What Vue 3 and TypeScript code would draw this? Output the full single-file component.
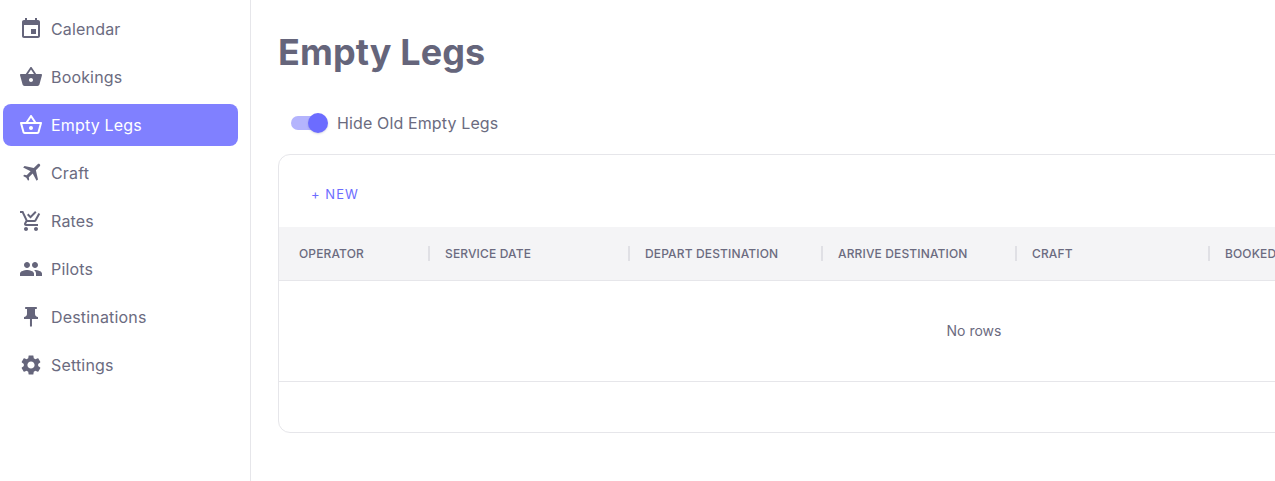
<script setup lang="ts">
interface NavItem {
  label: string;
  path: string;
  transform?: string;
  active?: boolean;
}

const nav: NavItem[] = [
  {
    label: "Calendar",
    path: "M17 12h-5v5h5v-5zM16 1v2H8V1H6v2H5c-1.11 0-1.99.9-1.99 2L3 19c0 1.1.89 2 2 2h14c1.1 0 2-.9 2-2V5c0-1.1-.9-2-2-2h-1V1h-2zm3 18H5V8h14v11z",
  },
  {
    label: "Bookings",
    path: "M17.21 9l-4.38-6.56c-.19-.28-.51-.42-.83-.42-.32 0-.64.14-.83.43L6.79 9H2c-.55 0-1 .45-1 1 0 .09.01.18.04.27l2.54 9.27c.23.84 1 1.46 1.92 1.46h13c.92 0 1.69-.62 1.93-1.46l2.54-9.27L23 10c0-.55-.45-1-1-1h-4.79zM9 9l3-4.4L15 9H9zm3 8c-1.1 0-2-.9-2-2s.9-2 2-2 2 .9 2 2-.9 2-2 2z",
  },
  {
    label: "Empty Legs",
    active: true,
    path: "M22 9h-4.79l-4.38-6.56c-.19-.28-.51-.42-.83-.42s-.64.14-.83.43L6.79 9H2c-.55 0-1 .45-1 1 0 .09.01.18.04.27l2.54 9.27c.23.84 1 1.46 1.92 1.46h13c.92 0 1.69-.62 1.93-1.46l2.54-9.27L23 10c0-.55-.45-1-1-1zM12 4.8L14.8 9H9.2L12 4.8zM18.5 19l-12.99.01L3.31 11H20.7l-2.2 8zM12 13c-1.1 0-2 .9-2 2s.9 2 2 2 2-.9 2-2-.9-2-2-2z",
  },
  {
    label: "Craft",
    transform: "translate(2.2 -1.7) rotate(45 11.5 12)",
    path: "M21 16v-2l-8-5V3.5c0-.83-.67-1.5-1.5-1.5S10 2.67 10 3.5V9l-8 5v2l8-2.5V19l-2 1.5V22l3.5-1 3.5 1v-1.5L13 19v-5.5l8 2.5z",
  },
  {
    label: "Rates",
    path: "M11.5 9.5L8 6l1.41-1.41 2.09 2.09 4.59-4.59L17.5 3.5zM7 18c-1.1 0-1.99.9-1.99 2S5.9 22 7 22s2-.9 2-2-.9-2-2-2zm10 0c-1.1 0-1.99.9-1.99 2s.89 2 1.99 2 2-.9 2-2-.9-2-2-2zm-9.83-3.25l.03-.12.9-1.63h7.45c.75 0 1.41-.41 1.75-1.03l3.86-7.01L19.42 4h-.01l-1.1 2-2.76 5H8.53l-.13-.27L6.16 6l-.95-2-.94-2H1v2h2l3.6 7.59-1.35 2.45c-.16.28-.25.61-.25.96 0 1.1.9 2 2 2h12v-2H7.42c-.13 0-.25-.11-.25-.25z",
  },
  {
    label: "Pilots",
    path: "M16 11c1.66 0 2.99-1.34 2.99-3S17.66 5 16 5c-1.66 0-3 1.34-3 3s1.34 3 3 3zm-8 0c1.66 0 2.99-1.34 2.99-3S9.66 5 8 5C6.34 5 5 6.34 5 8s1.34 3 3 3zm0 2c-2.33 0-7 1.17-7 3.5V19h14v-2.5c0-2.33-4.67-3.5-7-3.5zm8 0c-.29 0-.62.02-.97.05 1.16.84 1.97 1.97 1.97 3.45V19h6v-2.5c0-2.33-4.67-3.5-7-3.5z",
  },
  {
    label: "Destinations",
    path: "M16 9V4h1c.55 0 1-.45 1-1s-.45-1-1-1H7c-.55 0-1 .45-1 1s.45 1 1 1h1v5c0 1.66-1.34 3-3 3v2h5.97v7l1 1 1-1v-7H19v-2c-1.66 0-3-1.34-3-3z",
  },
  {
    label: "Settings",
    path: "M19.14 12.94c.04-.3.06-.61.06-.94 0-.32-.02-.64-.07-.94l2.03-1.58c.18-.14.23-.41.12-.61l-1.92-3.32c-.12-.22-.37-.29-.59-.22l-2.39.96c-.5-.38-1.03-.7-1.62-.94l-.36-2.54c-.04-.24-.24-.41-.48-.41h-3.84c-.24 0-.43.17-.47.41l-.36 2.54c-.59.24-1.13.57-1.62.94l-2.39-.96c-.22-.08-.47 0-.59.22L2.74 8.87c-.12.21-.08.47.12.61l2.03 1.58c-.05.3-.09.63-.09.94s.02.64.07.94l-2.03 1.58c-.18.14-.23.41-.12.61l1.92 3.32c.12.22.37.29.59.22l2.39-.96c.5.38 1.03.7 1.62.94l.36 2.54c.05.24.24.41.48.41h3.84c.24 0 .44-.17.47-.41l.36-2.54c.59-.24 1.13-.56 1.62-.94l2.39.96c.22.08.47 0 .59-.22l1.92-3.32c.12-.22.07-.47-.12-.61l-2.01-1.58zM12 15.6c-1.98 0-3.6-1.62-3.6-3.6s1.62-3.6 3.6-3.6 3.6 1.62 3.6 3.6-1.62 3.6-3.6 3.6z",
  },
];

const columns = ["Operator", "Service Date", "Depart Destination", "Arrive Destination", "Craft", "Booked"];
</script>

<template>
  <div class="layout">
    <aside class="sidebar">
      <a v-for="item in nav" :key="item.label" class="nav-item" :class="{ active: item.active }">
        <svg class="nav-icon" viewBox="0 0 24 24" width="24" height="24" fill="currentColor">
          <path :d="item.path" :transform="item.transform" />
        </svg>
        <span>{{ item.label }}</span>
      </a>
    </aside>

    <main class="content">
      <h1 class="title">Empty Legs</h1>

      <div class="toggle-row">
        <span class="switch"><span class="thumb"></span></span>
        <span class="toggle-label">Hide Old Empty Legs</span>
      </div>

      <section class="card">
        <div class="toolbar"><button class="new-btn">+ New</button></div>
        <div class="thead">
          <div v-for="col in columns" :key="col" class="th">{{ col }}</div>
        </div>
        <div class="empty">No rows</div>
        <div class="tfoot"></div>
      </section>
    </main>
  </div>
</template>

<style>
html,
body {
  margin: 0;
  background: #fff;
  overflow: hidden;
}
</style>

<style scoped>
.layout {
  display: flex;
  height: 481px;
  width: 1275px;
  overflow: hidden;
  font-family: Inter, "Noto Sans", sans-serif;
  color: #6b6b80;
}

.sidebar {
  flex: 0 0 251px;
  box-sizing: border-box;
  border-right: 1px solid #e6e6ea;
  padding: 8px 12px 0 3px;
  display: flex;
  flex-direction: column;
  gap: 6px;
}

.nav-item {
  display: flex;
  align-items: center;
  gap: 8px;
  height: 42px;
  padding-left: 16px;
  border-radius: 8px;
  font-size: 16px;
  letter-spacing: 0.17px;
}

.nav-item.active {
  background: #8080ff;
  color: #fff;
}

.nav-icon {
  flex: none;
  color: #65657b;
}

.active .nav-icon {
  color: #fff;
}

.content {
  flex: 1;
  min-width: 0;
  padding: 0 0 0 27px;
}

.title {
  margin: 0;
  padding-top: 30px;
  font-size: 36px;
  line-height: 44px;
  font-weight: 700;
  letter-spacing: 0.1px;
  color: #65657b;
}

.toggle-row {
  display: flex;
  align-items: center;
  height: 38px;
  margin-top: 30px;
  padding-left: 13px;
  gap: 9px;
}

.switch {
  position: relative;
  width: 34px;
  height: 14px;
  margin-right: 3px;
  border-radius: 7px;
  background: #b4b4fd;
}

.thumb {
  position: absolute;
  right: -3px;
  top: -3px;
  width: 20px;
  height: 20px;
  border-radius: 50%;
  background: #6c6cff;
  box-shadow: 0 1px 2px rgba(60, 60, 120, 0.2);
}

.toggle-label {
  font-size: 16px;
  letter-spacing: 0.13px;
}

.card {
  width: 1390px;
  box-sizing: border-box;
  margin-top: 12px;
  border: 1px solid #e6e6ea;
  border-radius: 12px;
  overflow: hidden;
}

.toolbar {
  height: 72px;
  box-sizing: border-box;
  padding: 6px 0 0 24px;
  display: flex;
  align-items: center;
}

.new-btn {
  border: 0;
  background: none;
  padding: 0 8px;
  font: 400 13px Inter, sans-serif;
  letter-spacing: 1.05px;
  text-transform: uppercase;
  color: #6c6cff;
}

.thead {
  display: grid;
  grid-template-columns: 149px 200px 193px 194px 193px 1fr;
  height: 53px;
  align-items: center;
  background: #f4f4f6;
  border-bottom: 1px solid #e6e6ea;
}

.th {
  box-sizing: border-box;
  padding-left: 15px;
  font-size: 12px;
  font-weight: 500;
  letter-spacing: 0.14px;
  text-transform: uppercase;
  white-space: nowrap;
  border-left: 2px solid #e0e0e5;
  line-height: 15px;
}

.th:first-child {
  padding-left: 20px;
  border-left: 0;
}

.empty {
  height: 101px;
  box-sizing: border-box;
  padding: 0 0 1px 2px;
  display: flex;
  align-items: center;
  justify-content: center;
  font-size: 14px;
  border-bottom: 1px solid #e6e6ea;
}

.tfoot {
  height: 50px;
}
</style>
